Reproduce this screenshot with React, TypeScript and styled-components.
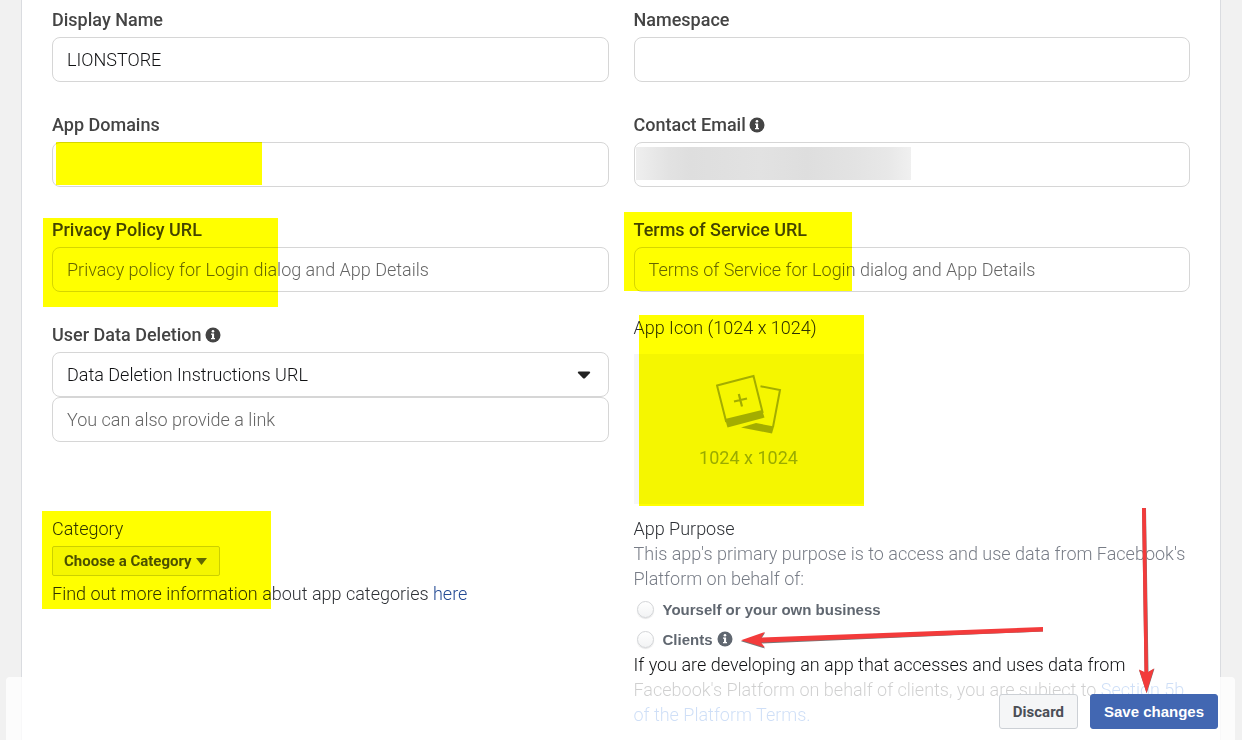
import React from "react";
import styled, { createGlobalStyle } from "styled-components";

const GlobalStyle = createGlobalStyle`
  *, *::before, *::after { box-sizing: border-box; }
  html, body { margin: 0; min-height: 100%; background: #f1f1f1; }
  body {
    font-family: Roboto, "Liberation Sans", sans-serif;
    font-size: 18px;
    font-weight: 300;
    line-height: 25px;
    color: #101113;
  }
`;

const Panel = styled.main`
  min-height: 100vh;
  margin: 0 21px;
  padding: 8px 30px 12px;
  background: #fff;
  border: solid #dadce0;
  border-width: 0 1px;
`;

const Columns = styled.form`
  display: grid;
  grid-template-columns: repeat(2, minmax(0, 1fr));
  column-gap: 25px;
`;

const Field = styled.div`
  position: relative;
  display: flex;
  flex-direction: column;
  min-height: 105px;
`;

const FieldLabel = styled.label`
  display: flex;
  align-items: center;
  gap: 3px;
  height: 23px;
  margin-bottom: 6px;
  font-weight: 500;
  color: #444;
`;

const TextInput = styled.input`
  width: 100%;
  height: 45px;
  padding: 0 14px;
  border: 1px solid #d6d6d6;
  border-radius: 8px;
  background: #fff;
  font: inherit;
  color: #101113;
  &::placeholder { color: #666; opacity: 1; }
`;

const SelectWrap = styled.div`
  position: relative;
  display: flex;
  align-items: center;
`;

const Select = styled.select`
  width: 100%;
  height: 45px;
  padding: 0 14px;
  appearance: none;
  border: 1px solid #d6d6d6;
  border-radius: 8px;
  background: #fff;
  font: inherit;
  color: #101113;
`;

const SelectCaret = styled.svg`
  position: absolute;
  right: 18px;
  pointer-events: none;
`;

const Highlight = styled.span<{ $x: number; $y: number; $w: number; $h: number }>`
  position: absolute;
  left: ${(p) => p.$x}px;
  top: ${(p) => p.$y}px;
  width: ${(p) => p.$w}px;
  height: ${(p) => p.$h}px;
  background: #ff0;
  mix-blend-mode: multiply;
  pointer-events: none;
`;

const Redaction = styled.span`
  position: absolute;
  left: 2px;
  top: 34px;
  width: 275px;
  height: 33px;
  background: linear-gradient(90deg, #efefef 0, #e2e2e2 12%, #dedede 20%, #e2e2e2 45%, #dedede 62%, #e3e3e3 80%, #e8e8e8 92%, #f0f0f0 100%);
`;

const IconUpload = styled.div`
  position: relative;
  margin-top: -8px;
  margin-bottom: 12px;
`;

const PlainHeading = styled.div`
  color: #2f3237;
`;

const DropButton = styled.button`
  display: flex;
  flex-direction: column;
  align-items: center;
  width: 230px;
  height: 150px;
  margin-top: 14px;
  padding: 20px 0 0;
  border: 0;
  background: #f5f6f7;
  font: inherit;
  font-weight: 400;
  color: #9aabb8;
`;

const UploadArt = styled.svg`
  margin-bottom: 11px;
`;

const Section = styled.section`
  position: relative;
`;

const CategoryButton = styled.button`
  display: flex;
  align-items: center;
  gap: 4px;
  height: 30px;
  margin: 5px 0;
  padding: 0 12px 0 11px;
  border: 1px solid #ccd0d5;
  border-radius: 2px;
  background: #f5f6f7;
  font: bold 15px Roboto, "Liberation Sans", sans-serif;
  color: #4b4f56;
`;

const BodyText = styled.p<{ $color: string }>`
  margin: 0;
  color: ${(p) => p.$color};
`;

const Link = styled.a`
  color: #234a94;
  text-decoration: none;
`;

const BrightLink = styled(Link)`
  color: #1060d6;
`;

const Options = styled.div`
  padding: 3px 0 0 3px;
  margin-bottom: -2px;
`;

const Option = styled.label`
  position: relative;
  display: flex;
  align-items: center;
  width: fit-content;
  height: 30px;
  font-family: "Liberation Sans", Arial, sans-serif;
  font-size: 15px;
  font-weight: bold;
  color: #606770;
`;

const Radio = styled.input`
  appearance: none;
  width: 17px;
  height: 17px;
  margin: 0 9px 0 0;
  border: 1px solid #d3d5d8;
  border-radius: 50%;
  background: linear-gradient(#fff, #f2f3f4);
  box-shadow: 0 1px 1px #e4e4e4;
`;

const OptionInfo = styled.span`
  display: flex;
  margin-left: 4px;
`;

const ActionBar = styled.footer`
  position: fixed;
  left: 6px;
  right: 7px;
  bottom: 0;
  display: flex;
  justify-content: flex-end;
  align-items: flex-start;
  gap: 12px;
  height: 63px;
  padding: 17px 17px 0;
  border-radius: 4px 4px 0 0;
  background: rgba(255, 255, 255, 0.8);
`;

const ActionButton = styled.button<{ $primary?: boolean }>`
  height: 35px;
  padding: 0 13px;
  border: 1px solid ${(p) => (p.$primary ? "#4267b2" : "#ccd0d5")};
  border-radius: 3px;
  background: ${(p) => (p.$primary ? "#4267b2" : "#f5f6f7")};
  font: bold 15px ${(p) => (p.$primary ? '"Liberation Sans", Arial' : 'Roboto, "Liberation Sans"')}, sans-serif;
  color: ${(p) => (p.$primary ? "#fff" : "#4b4f56")};
`;

const ClientsArrow = styled.svg`
  position: absolute;
  left: 100%;
  top: 0;
  margin-left: 6px;
  pointer-events: none;
`;

const SaveArrow = styled.svg`
  position: absolute;
  right: 78px;
  bottom: 46px;
  pointer-events: none;
`;

function InfoIcon({ color = "#444" }: { color?: string }) {
  return (
    <svg width="16" height="16" viewBox="0 0 16 16" aria-hidden="true">
      <circle cx="8" cy="8" r="7.5" fill={color} />
      <circle cx="8" cy="4.2" r="1.3" fill="#fff" />
      <path d="M6 6.6h3.1v4.4H10v1.2H6v-1.2h1V7.8H6z" fill="#fff" />
    </svg>
  );
}

export default function App() {
  return (
    <>
      <GlobalStyle />
      <Panel>
        <Columns onSubmit={(e) => e.preventDefault()}>
          <Field>
            <FieldLabel htmlFor="name">Display Name</FieldLabel>
            <TextInput id="name" defaultValue="LIONSTORE" />
          </Field>
          <Field>
            <FieldLabel htmlFor="namespace">Namespace</FieldLabel>
            <TextInput id="namespace" />
          </Field>

          <Field>
            <FieldLabel htmlFor="domains">App Domains</FieldLabel>
            <TextInput id="domains" />
            <Highlight $x={4} $y={29} $w={206} $h={43} />
          </Field>
          <Field>
            <FieldLabel htmlFor="email">
              Contact Email <InfoIcon />
            </FieldLabel>
            <TextInput id="email" type="email" />
            <Redaction />
          </Field>

          <Field>
            <FieldLabel htmlFor="privacy">Privacy Policy URL</FieldLabel>
            <TextInput id="privacy" placeholder="Privacy policy for Login dialog and App Details" />
            <Highlight $x={-9} $y={0} $w={235} $h={89} />
          </Field>
          <Field>
            <FieldLabel htmlFor="terms">Terms of Service URL</FieldLabel>
            <TextInput id="terms" placeholder="Terms of Service for Login dialog and App Details" />
            <Highlight $x={-10} $y={-6} $w={228} $h={79} />
          </Field>

          <Field>
            <FieldLabel htmlFor="deletion">
              User Data Deletion <InfoIcon />
            </FieldLabel>
            <SelectWrap>
              <Select id="deletion">
                <option>Data Deletion Instructions URL</option>
              </Select>
              <SelectCaret width="14" height="8" viewBox="0 0 14 8" aria-hidden="true">
                <path d="M2 0.5h10q2 0.2 0.7 1.8L8.2 7Q7 8 5.8 7L1.3 2.3Q0 0.7 2 0.5z" fill="#222" />
              </SelectCaret>
            </SelectWrap>
            <TextInput aria-label="Data deletion link" placeholder="You can also provide a link" />
          </Field>
          <IconUpload>
            <PlainHeading>App Icon (1024 x 1024)</PlainHeading>
            <DropButton type="button">
              <UploadArt width="66" height="60" viewBox="0 0 66 60" aria-hidden="true">
                <path d="M1 11.500 37.500 2 46.500 38 10 47z" fill="none" stroke="#a3adb8" strokeWidth="2" />
                <path d="M9 45 46 36 48.500 43.500 11.500 53.500z" fill="#a3adb8" />
                <path d="M18 27.500 31 24.500M22.800 20 26 32.500" stroke="#a3adb8" strokeWidth="2.200" />
                <path d="M44.500 12.300 64 16 57 53" fill="none" stroke="#a3adb8" strokeWidth="2" />
                <path d="M25 53.500 40 49 58 52.500 56 59.500z" fill="#a3adb8" />
              </UploadArt>
              1024 x 1024
            </DropButton>
            <Highlight $x={5} $y={0} $w={225} $h={191} />
          </IconUpload>

          <Section>
            <PlainHeading>Category</PlainHeading>
            <CategoryButton type="button" aria-haspopup="listbox">
              Choose a Category
              <svg width="11" height="7" viewBox="0 0 11 7" aria-hidden="true">
                <path d="M0 0h11L5.5 7z" fill="#606770" />
              </svg>
            </CategoryButton>
            <BodyText $color="#2f3237">
              Find out more information about app categories <Link href="#categories">here</Link>
            </BodyText>
            <Highlight $x={-10} $y={-5} $w={229} $h={98} />
          </Section>
          <Section>
            <PlainHeading>App Purpose</PlainHeading>
            <BodyText $color="#787d87">
              This app's primary purpose is to access and use data from Facebook's Platform on behalf of:
            </BodyText>
            <Options>
              <Option>
                <Radio type="radio" name="purpose" />
                Yourself or your own business
              </Option>
              <Option>
                <Radio type="radio" name="purpose" />
                Clients
                <OptionInfo>
                  <InfoIcon color="#606770" />
                </OptionInfo>
                <ClientsArrow width="306" height="28" viewBox="0 0 306 28" aria-hidden="true">
                  <path d="M2 17.2 26 9 22 15 304 4v3.500L22 19.500 26 24.500z" fill="#777" />
                  <path d="M2 16.2 26 8 22 13.500 304 3v4.500L22 18.500 26 23.500z" fill="#f33b3b" />
                </ClientsArrow>
              </Option>
            </Options>
            <BodyText $color="#101113">
              If you are developing an app that accesses and uses data from Facebook's Platform on
              behalf of clients, you are subject to{" "}
              <BrightLink href="#terms-5b">Section 5b of the Platform Terms.</BrightLink>
            </BodyText>
          </Section>
        </Columns>
      </Panel>
      <ActionBar>
        <ActionButton type="button">Discard</ActionButton>
        <ActionButton type="button" $primary>
          Save changes
        </ActionButton>
        <SaveArrow width="20" height="186" viewBox="0 0 20 186" aria-hidden="true">
          <path d="M5 0h4l2.500 164 6-3.500-7.800 25L2 162l5.500 2.500z" fill="#777" />
          <path d="M5 0h3.800l2.200 164 6-3.500-7.500 24.500L2 161.500l5.500 2.500z" fill="#f33b3b" />
        </SaveArrow>
      </ActionBar>
    </>
  );
}
